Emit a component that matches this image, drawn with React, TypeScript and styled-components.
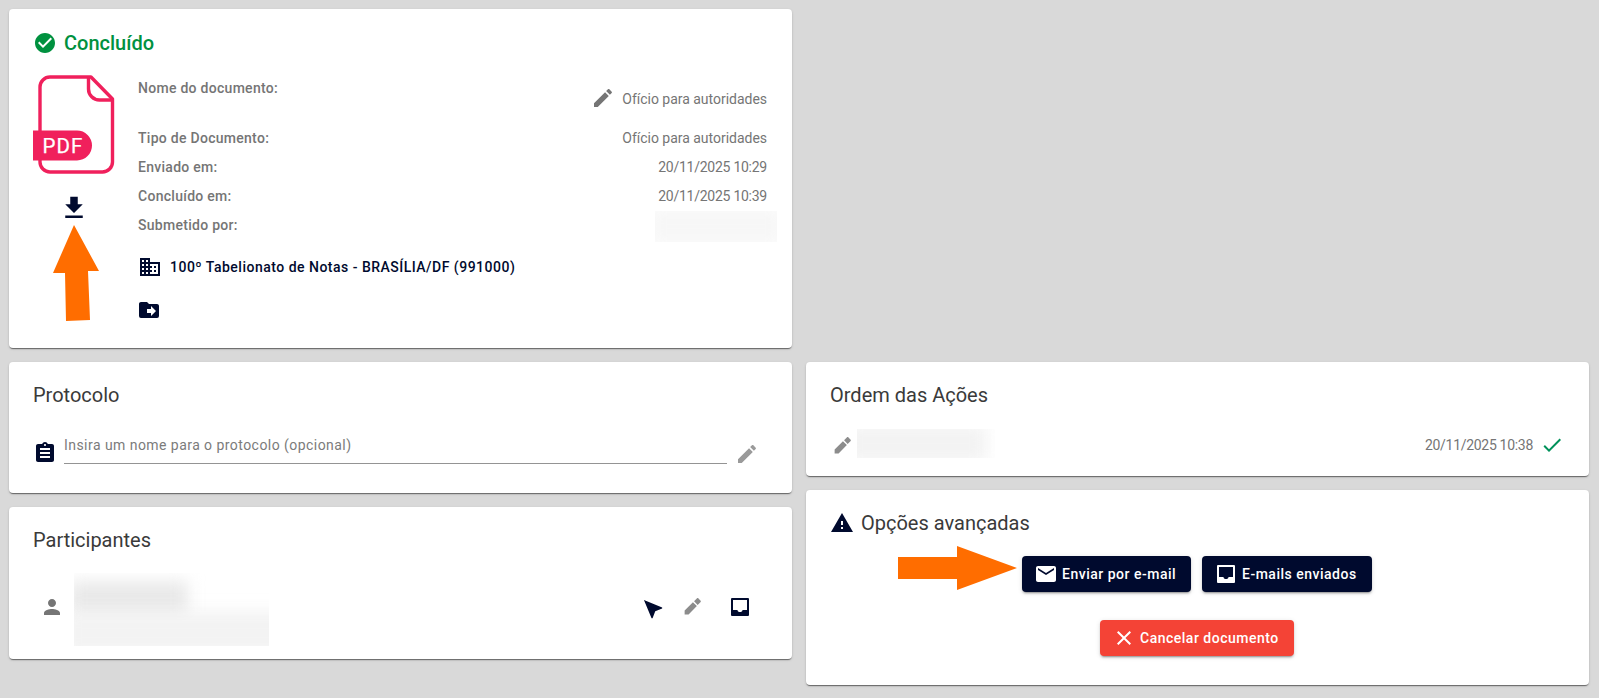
import React from "react";
import styled, { createGlobalStyle } from "styled-components";

const Global = createGlobalStyle`
  html, body { margin: 0; padding: 0; background: #d9d9d9; }
  body { font-family: Roboto, "Liberation Sans", sans-serif; overflow: hidden; }
`;

const Page = styled.div`
  position: relative;
  width: 1599px;
  height: 698px;
  box-sizing: border-box;
  padding: 9px 10px 0 9px;
  display: grid;
  grid-template-columns: 783px 783px;
  column-gap: 14px;
  align-items: start;
`;

const Column = styled.div`
  display: flex;
  flex-direction: column;
  gap: 14px;
`;

const Spacer = styled.div<{ $h: number }>`
  height: ${(p) => p.$h}px;
`;

const Card = styled.section<{ $h: number }>`
  box-sizing: border-box;
  height: ${(p) => p.$h}px;
  padding: 24px;
  background: #fff;
  border-radius: 4px;
  box-shadow: 0 2px 1px -1px rgba(0, 0, 0, 0.35), 0 1px 1px 0 rgba(0, 0, 0, 0.2), 0 1px 3px 0 rgba(0, 0, 0, 0.12);
`;

const Title = styled.h2`
  margin: -3px 0 0;
  font-size: 20px;
  line-height: 24px;
  font-weight: 400;
  color: #3a3a3a;
`;

const TitleRow = styled.div`
  display: flex;
  align-items: center;
  gap: 7px;
  margin: -3px 0 0;
`;

const RowTitle = styled(Title)`
  margin: 0;
`;

const StatusRow = styled.div`
  display: flex;
  align-items: center;
  gap: 7px;
  height: 20px;
`;

const StatusText = styled.h1`
  margin: 0;
  font-size: 20px;
  line-height: 20px;
  font-weight: 500;
  color: #00913f;
`;

const DocBody = styled.div`
  display: flex;
  margin-top: 22px;
`;

const DocIconCol = styled.div`
  width: 105px;
  flex: none;
  display: flex;
  flex-direction: column;
`;

const DownloadSlot = styled.div`
  width: 82px;
  margin-top: 17px;
  display: flex;
  justify-content: center;
`;

const DocInfo = styled.div`
  flex: 1;
  min-width: 0;
  margin-top: -2px;
  padding-right: 1px;
  display: flex;
  flex-direction: column;
`;

const InfoRow = styled.div`
  height: 29px;
  display: flex;
  align-items: center;
  justify-content: space-between;
`;

const NameRow = styled.div`
  height: 50px;
  display: flex;
  justify-content: space-between;
`;

const Label = styled.span`
  font-size: 14px;
  line-height: 20px;
  font-weight: 500;
  letter-spacing: 0.28px;
  color: #757575;
`;

const NameLabel = styled(Label)`
  margin-top: 5px;
`;

const Value = styled.span<{ $tight?: boolean }>`
  font-size: 14px;
  line-height: 20px;
  font-weight: 400;
  letter-spacing: ${(p) => (p.$tight ? "-0.25px" : "-0.02px")};
  color: #757575;
`;

const NameValue = styled.div`
  display: flex;
  align-items: center;
  gap: 7px;
  margin-top: 14px;
  height: 24px;
`;

const NameEdit = styled.div`
  margin-top: -2px;
`;

const OfficeRow = styled.div`
  display: flex;
  align-items: center;
  gap: 8px;
  margin-top: 16px;
  height: 24px;
`;

const OfficeName = styled.span`
  font-size: 14px;
  line-height: 20px;
  font-weight: 500;
  letter-spacing: 0.49px;
  color: #000a2e;
`;

const MoveRow = styled.div`
  display: flex;
  margin: 19px 0 0 -1px;
  height: 24px;
`;

const BlurClip = styled.div<{ $w: number; $h: number; $mr?: number; $mt?: number; $ml?: number }>`
  position: relative;
  width: ${(p) => p.$w}px;
  height: ${(p) => p.$h}px;
  margin-right: ${(p) => p.$mr ?? 0}px;
  margin-top: ${(p) => p.$mt ?? 0}px;
  margin-left: ${(p) => p.$ml ?? 0}px;
  overflow: hidden;
  flex: none;
  background: #fff;
`;

const BlurBar = styled.div<{ $x: number; $y: number; $w: number; $h: number; $c: string }>`
  position: absolute;
  left: ${(p) => p.$x}px;
  top: ${(p) => p.$y}px;
  width: ${(p) => p.$w}px;
  height: ${(p) => p.$h}px;
  background: ${(p) => p.$c};
  filter: blur(8px);
`;

const ProtocolRow = styled.div`
  display: flex;
  align-items: flex-start;
  margin-top: 25px;
`;

const ProtocolIcon = styled.div`
  width: 31px;
  height: 24px;
  margin-top: 9px;
  flex: none;
`;

const ProtocolField = styled.div`
  width: 663px;
  height: 28px;
  padding-top: 3px;
  flex: none;
  border-bottom: 1px solid #949494;
  font-size: 14px;
  line-height: 21px;
  letter-spacing: 0.45px;
  color: #7b7b7b;
`;

const ProtocolEdit = styled.div`
  width: 24px;
  height: 24px;
  margin: 10px 0 0 8px;
  flex: none;
`;

const ParticipantRow = styled.div`
  display: flex;
  align-items: center;
  margin-top: 21px;
  height: 73px;
`;

const PersonSlot = styled.div`
  width: 34px;
  height: 24px;
  margin: 0 0 6px 7px;
  flex: none;
`;

const ParticipantActions = styled.div`
  margin: 0 16px 6px auto;
  display: flex;
  align-items: center;
  gap: 19px;
`;

const PenSlot = styled.div`
  width: 21px;
  height: 21px;
  margin-right: 6px;
`;

const OrderRow = styled.div`
  display: flex;
  align-items: center;
  margin-top: 22px;
  height: 29px;
`;

const OrderPen = styled.div`
  width: 21px;
  height: 21px;
  margin-left: 2px;
  margin-top: 3px;
  flex: none;
`;

const OrderDate = styled.span`
  margin-left: auto;
  margin-top: 3px;
  font-size: 14px;
  line-height: 20px;
  letter-spacing: -0.3px;
  color: #757575;
`;

const OrderCheck = styled.div`
  margin: 3px 1px 0 7px;
  height: 24px;
`;

const ButtonRow = styled.div`
  display: flex;
  justify-content: center;
  gap: 11px;
  margin: 21px 0 0 -1px;
`;

const ActionButton = styled.button<{ $bg: string; $w: number }>`
  display: flex;
  align-items: center;
  gap: 4px;
  width: ${(p) => p.$w}px;
  height: 36px;
  padding: 0 0 0 12px;
  border: 0;
  border-radius: 4px;
  background: ${(p) => p.$bg};
  color: #fff;
  font-family: inherit;
  font-size: 14px;
  font-weight: 500;
  letter-spacing: 0.5px;
  white-space: nowrap;
  box-shadow: 0 3px 1px -2px rgba(0, 0, 0, 0.2), 0 2px 2px 0 rgba(0, 0, 0, 0.14), 0 1px 5px 0 rgba(0, 0, 0, 0.12);
`;

const CancelRow = styled(ButtonRow)`
  margin-top: 28px;
`;

const Callout = styled.svg`
  position: absolute;
  left: 0;
  top: 0;
  width: 1599px;
  height: 698px;
  pointer-events: none;
`;

const Icon = ({ d, size = 24, color, flip }: { d: string; size?: number; color: string; flip?: number }) => (
  <svg
    width={size}
    height={size}
    viewBox="0 0 24 24"
    fill={color}
    style={{ display: "block", flex: "none", transform: flip ? `rotate(${flip}deg)` : undefined }}
  >
    <path d={d} />
  </svg>
);

const NAVY = "#000a2e";
const P = {
  check: "M12 2C6.48 2 2 6.48 2 12s4.48 10 10 10 10-4.48 10-10S17.52 2 12 2zm-2 15l-5-5 1.41-1.41L10 14.17l7.59-7.59L19 8l-9 9z",
  edit: "M3 17.25V21h3.75L17.81 9.94l-3.75-3.75L3 17.25zM20.71 7.04c.39-.39.39-1.02 0-1.41l-2.34-2.34c-.39-.39-1.02-.39-1.41 0l-1.83 1.83 3.75 3.75 1.83-1.83z",
  pen: "M3 16.5V21h4.5L17 11.5 12.5 7 3 16.5zM21.3 6.8c.4-.4.4-1 0-1.4l-2.7-2.7c-.4-.4-1-.4-1.4 0l-3.4 3.4 4.1 4.1 3.4-3.4z",
  download: "M19 9h-4V3H9v6H5l7 7 7-7zM5 18v2h14v-2H5z",
  domain: "M12 7V3H2v18h20V7H12zM6 19H4v-2h2v2zm0-4H4v-2h2v2zm0-4H4V9h2v2zm0-4H4V5h2v2zm4 12H8v-2h2v2zm0-4H8v-2h2v2zm0-4H8V9h2v2zm0-4H8V5h2v2zm10 12h-8v-2h2v-2h-2v-2h2v-2h-2V9h8v10zm-2-8h-2v2h2v-2zm0 4h-2v2h2v-2z",
  move: "M14,18V15H10V11H14V8L19,13M20,6H12L10,4H4C2.89,4 2,4.89 2,6V18A2,2 0 0,0 4,20H20A2,2 0 0,0 22,18V8C22,6.89 21.1,6 20,6Z",
  clip: "M19 3h-4.18C14.4 1.84 13.3 1 12 1c-1.3 0-2.4.84-2.82 2H5c-1.1 0-2 .9-2 2v14c0 1.1.9 2 2 2h14c1.1 0 2-.9 2-2V5c0-1.1-.9-2-2-2zm-7 0c.55 0 1 .45 1 1s-.45 1-1 1-1-.45-1-1 .45-1 1-1zm5 14H7v-2h10v2zm0-4H7v-2h10v2zm0-4H7V7h10v2z",
  person: "M12 12c2.21 0 4-1.79 4-4s-1.79-4-4-4-4 1.79-4 4 1.79 4 4 4zm0 2c-2.67 0-8 1.34-8 4v2h16v-2c0-2.66-5.33-4-8-4z",
  nav: "M12,2L4.5,20.29L5.21,21L12,18L18.79,21L19.5,20.29L12,2Z",
  inbox: "M20 3H4a1 1 0 0 0-1 1v16a1 1 0 0 0 1 1h16a1 1 0 0 0 1-1V4a1 1 0 0 0-1-1zm-1 12h-4.5c0 1.4-1.1 2-2.5 2s-2.5-.6-2.5-2H5V5h14v10z",
  warning: "M1 21h22L12 2 1 21zm12-3h-2v-2h2v2zm0-4h-2v-4h2v4z",
  mail: "M20 4H4c-1.1 0-1.99.9-1.99 2L2 18c0 1.1.9 2 2 2h16c1.1 0 2-.9 2-2V6c0-1.1-.9-2-2-2zm0 4l-8 5-8-5V6l8 5 8-5v2z",
  close: "M19,6.41L17.59,5L12,10.59L6.41,5L5,6.41L10.59,12L5,17.59L6.41,19L12,13.41L17.59,19L19,17.59L13.41,12L19,6.41Z",
  tick: "M21,7L9,19L3.5,13.5L4.91,12.09L9,16.17L19.59,5.59L21,7Z",
};

const PdfIcon = () => (
  <svg width="82" height="101" viewBox="0 0 82 101" style={{ display: "block" }}>
    <path
      d="M17 2H58L79.5 24V87a10 10 0 0 1-10 10H17a10 10 0 0 1-10-10V12A10 10 0 0 1 17 2Z"
      fill="none"
      stroke="#f0205c"
      strokeWidth="3.4"
      strokeLinejoin="round"
    />
    <path d="M55.5 2V14A11 11 0 0 0 66.5 25H80" fill="none" stroke="#f0205c" strokeWidth="3.4" />
    <path d="M0 55.5H44a15 15 0 0 1 0 30H0Z" fill="#f0205c" />
    <text x="9.5" y="78" fontFamily="Roboto, sans-serif" fontSize="20.5" letterSpacing="1" stroke="#fff" strokeWidth="0.25" fill="#fff">
      PDF
    </text>
  </svg>
);

export default function App() {
  return (
    <>
      <Global />
      <Page>
        <Column>
          <Card $h={339}>
            <StatusRow>
              <Icon d={P.check} color="#00913f" />
              <StatusText>Concluído</StatusText>
            </StatusRow>
            <DocBody>
              <DocIconCol>
                <PdfIcon />
                <DownloadSlot>
                  <Icon d={P.download} color={NAVY} size={30} />
                </DownloadSlot>
              </DocIconCol>
              <DocInfo>
                <NameRow>
                  <NameLabel>Nome do documento:</NameLabel>
                  <NameValue>
                    <NameEdit>
                      <Icon d={P.edit} color="#757575" />
                    </NameEdit>
                    <Value>Ofício para autoridades</Value>
                  </NameValue>
                </NameRow>
                <InfoRow>
                  <Label>Tipo de Documento:</Label>
                  <Value>Ofício para autoridades</Value>
                </InfoRow>
                <InfoRow>
                  <Label>Enviado em:</Label>
                  <Value $tight>20/11/2025 10:29</Value>
                </InfoRow>
                <InfoRow>
                  <Label>Concluído em:</Label>
                  <Value $tight>20/11/2025 10:39</Value>
                </InfoRow>
                <InfoRow>
                  <Label>Submetido por:</Label>
                  <BlurClip $w={122} $h={31} $mr={-10} $mt={4}>
                    <BlurBar $x={-6} $y={-4} $w={134} $h={39} $c="#f7f7f7" />
                  </BlurClip>
                </InfoRow>
                <OfficeRow>
                  <Icon d={P.domain} color={NAVY} />
                  <OfficeName>100º Tabelionato de Notas - BRASÍLIA/DF (991000)</OfficeName>
                </OfficeRow>
                <MoveRow>
                  <Icon d={P.move} color={NAVY} />
                </MoveRow>
              </DocInfo>
            </DocBody>
          </Card>
          <Card $h={131}>
            <Title>Protocolo</Title>
            <ProtocolRow>
              <ProtocolIcon>
                <Icon d={P.clip} color={NAVY} />
              </ProtocolIcon>
              <ProtocolField>Insira um nome para o protocolo (opcional)</ProtocolField>
              <ProtocolEdit>
                <Icon d={P.edit} color="#9a9a9a" />
              </ProtocolEdit>
            </ProtocolRow>
          </Card>
          <Card $h={152}>
            <Title>Participantes</Title>
            <ParticipantRow>
              <PersonSlot>
                <Icon d={P.person} color="#757575" />
              </PersonSlot>
              <BlurClip $w={195} $h={73}>
                <BlurBar $x={-4} $y={8} $w={118} $h={38} $c="#e9e9e9" />
                <BlurBar $x={-10} $y={38} $w={225} $h={44} $c="#f3f3f3" />
              </BlurClip>
              <ParticipantActions>
                <Icon d={P.nav} color={NAVY} flip={-45} />
                <PenSlot>
                  <Icon d={P.pen} color="#8c8c8c" size={21} />
                </PenSlot>
                <Icon d={P.inbox} color={NAVY} />
              </ParticipantActions>
            </ParticipantRow>
          </Card>
        </Column>
        <Column>
          <Spacer $h={339} />
          <Card $h={114}>
            <Title>Ordem das Ações</Title>
            <OrderRow>
              <OrderPen>
                <Icon d={P.pen} color="#8c8c8c" size={21} />
              </OrderPen>
              <BlurClip $w={138} $h={29} $ml={4}>
                <BlurBar $x={-12} $y={-4} $w={142} $h={37} $c="#f3f3f3" />
              </BlurClip>
              <OrderDate>20/11/2025 10:38</OrderDate>
              <OrderCheck>
                <Icon d={P.tick} color="#00915a" />
              </OrderCheck>
            </OrderRow>
          </Card>
          <Card $h={195}>
            <TitleRow>
              <Icon d={P.warning} color={NAVY} />
              <RowTitle>Opções avançadas</RowTitle>
            </TitleRow>
            <ButtonRow>
              <ActionButton $bg={NAVY} $w={169}>
                <Icon d={P.mail} color="#fff" />
                Enviar por e-mail
              </ActionButton>
              <ActionButton $bg={NAVY} $w={170}>
                <Icon d={P.inbox} color="#fff" />
                E-mails enviados
              </ActionButton>
            </ButtonRow>
            <CancelRow>
              <ActionButton $bg="#f44336" $w={194}>
                <Icon d={P.close} color="#fff" />
                Cancelar documento
              </ActionButton>
            </CancelRow>
          </Card>
        </Column>
        <Callout viewBox="0 0 1599 698">
          <polygon points="74,225 53,273 65,273 66,321 90,320 88,271 99,271" fill="#ff6d00" />
          <polygon points="898,557 957,557 957,546 1017,568 957,590 957,579 898,579" fill="#ff6d00" />
        </Callout>
      </Page>
    </>
  );
}
